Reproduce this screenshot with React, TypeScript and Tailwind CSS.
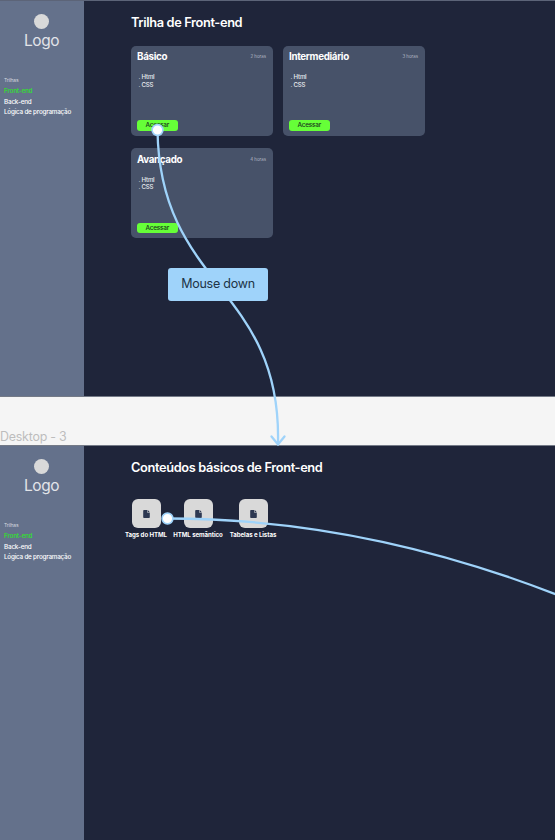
type Course = { title: string; hours: string };

const courses: Course[] = [
  { title: 'Básico', hours: '2 horas' },
  { title: 'Intermediário', hours: '3 horas' },
  { title: 'Avançado', hours: '4 horas' },
];

const lessons = [
  { label: 'Tags do HTML', box: 'w-[42px]' },
  { label: 'HTML semântico', box: 'ml-[6px] w-[50px]' },
  { label: 'Tabelas e Listas', box: 'ml-[6px] w-[48px]' },
];

function Sidebar() {
  return (
    <aside className="flex w-[84px] shrink-0 flex-col bg-[#64718b]">
      <div className="flex flex-col items-center pt-[13px] pr-px">
        <div className="size-[15px] rounded-full bg-[#d9d9d9]" />
        <div className="mt-[2px] text-[15.5px] leading-[19px] tracking-[-0.45px] text-[#e2e4e8]">Logo</div>
      </div>
      <nav className="mt-[27px] flex flex-col pl-[4px] whitespace-nowrap text-white">
        <span className="text-[5px] leading-[7px] tracking-[-0.2px] text-[#d3d7df]">Trilhas</span>
        <span className="mt-[2px] text-[6.3px] leading-[10.5px] font-semibold tracking-[-0.2px] text-[#36d936]">Front-end</span>
        <span className="text-[6.3px] leading-[10.5px] font-medium tracking-[-0.16px]">Back-end</span>
        <span className="text-[6.3px] leading-[10.5px] font-medium tracking-[-0.2px]">Lógica de programação</span>
      </nav>
    </aside>
  );
}

function CourseCard({ title, hours }: Course) {
  return (
    <article className="flex h-[90px] w-[142px] flex-col items-start rounded-[5px] bg-[#475269] px-[6px] pt-[4.3px] pb-[5px]">
      <div className="flex w-full items-center justify-between">
        <h2 className="text-[9.8px] leading-[14px] font-bold tracking-[-0.34px]">{title}</h2>
        <span className="pr-px text-[4.4px] leading-[6px] text-[#b4bac6]">{hours}</span>
      </div>
      <ul className="mt-[9.3px] pl-[1.5px] text-[6.1px] leading-[7.4px] font-medium tracking-[-0.18px] text-[#eceef2]">
        <li>. Html</li>
        <li>. CSS</li>
      </ul>
      <button className="mt-auto h-[10.5px] w-[40.5px] rounded-[3px] bg-[#66ff38] text-[6.4px] leading-[10.5px] font-medium tracking-[-0.22px] text-[#17331c]">
        Acessar
      </button>
    </article>
  );
}

function FileIcon() {
  return (
    <svg className="h-[8px] w-[7px]" viewBox="0 0 7 8">
      <path d="M1 0H4.3V2.8H6.8V7.2Q6.8 8 6 8H1Q.2 8 .2 7.2V.8Q.2 0 1 0Z" fill="#2e3953" />
      <path d="M4.8 .1 6.8 2.3H4.8Z" fill="#2e3953" />
    </svg>
  );
}

export default function App() {
  return (
    <div className="relative flex h-[840px] w-[555px] flex-col overflow-hidden bg-[#f5f5f5] font-['Inter',sans-serif] text-white">
      <section className="flex h-[397px] shrink-0 border-t border-b border-t-[#5c6478] border-b-[#747a87] bg-[#1f253a]">
        <Sidebar />
        <main className="pt-[12px] pl-[47px]">
          <h1 className="text-[12.8px] leading-[20px] font-semibold tracking-[-0.36px]">Trilha de Front-end</h1>
          <div className="mt-[12.6px] grid grid-cols-[142px_142px] gap-x-[10px] gap-y-[12.8px]">
            {courses.map((course) => (
              <CourseCard key={course.title} {...course} />
            ))}
          </div>
        </main>
      </section>

      <div className="flex h-[48px] shrink-0 items-end pb-[1.5px] text-[12.4px] leading-[15px] tracking-[-0.2px] text-[#bdbdbd]">
        Desktop - 3
      </div>

      <section className="flex min-h-0 flex-1 border-t border-t-[#747a87] bg-[#1f253a]">
        <Sidebar />
        <main className="pt-[12px] pl-[41px]">
          <h1 className="pl-[6px] text-[12.8px] leading-[20px] font-semibold tracking-[-0.36px]">
            Conteúdos básicos de Front-end
          </h1>
          <div className="mt-[21px] flex">
            {lessons.map(({ label, box }) => (
              <div key={label} className={`flex flex-col items-center ${box}`}>
                <div className="flex size-[29px] items-center justify-center rounded-[6px] bg-[#d9d9d9]">
                  <FileIcon />
                </div>
                <span className="mt-[3px] text-[6.1px] leading-[8px] font-bold tracking-[-0.06px] whitespace-nowrap">
                  {label}
                </span>
              </div>
            ))}
          </div>
        </main>
      </section>

      {/* Prototype connectors lie over both frames */}
      <svg className="absolute inset-0 h-[840px] w-[555px]" viewBox="0 0 555 840" fill="none">
        <g stroke="#9fd3fa" strokeWidth="2.3">
          <path d="M157.5 130C159.5 287 281.5 287 278 443" />
          <path d="M271.5 436.5 278 444.5 284.5 436.5" strokeLinecap="round" />
          <path d="M167.5 518.5Q361.5 518.5 557 594.8" />
        </g>
        <g fill="white" stroke="#9fd3fa" strokeWidth="1.6">
          <circle cx="157.5" cy="130" r="5.4" />
          <circle cx="167.5" cy="518.5" r="5.4" />
        </g>
      </svg>
      <div className="absolute top-[268px] left-[168px] flex h-[33px] w-[100px] items-center justify-center rounded-[3px] bg-[#9fd3fa] text-[12.5px] tracking-[-0.24px] text-[#203447]">
        Mouse down
      </div>
    </div>
  );
}
